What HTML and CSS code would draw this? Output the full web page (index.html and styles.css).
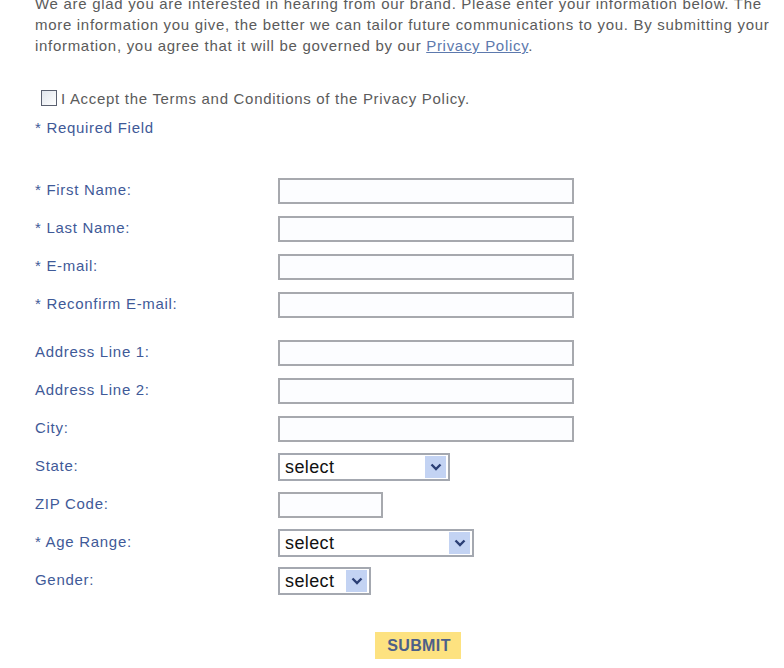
FILE: index.html
```html
<!DOCTYPE html>
<html>
<head>
<meta charset="utf-8">
<link rel="stylesheet" href="styles.css">
</head>
<body>
<div class="page">
  <p class="intro">We are glad you are interested in hearing from our brand. Please enter your information below. The<br>more information you give, the better we can tailor future communications to you. By submitting your<br>information, you agree that it will be governed by our <a href="#" class="link">Privacy Policy</a>.</p>

  <label class="accept"><span class="box"></span>I Accept the Terms and Conditions of the Privacy Policy.</label>
  <div class="required">* Required Field</div>

  <form class="form">
    <div class="group">
      <div class="row"><span class="label">* First Name:</span><input class="text wide" type="text"></div>
      <div class="row"><span class="label">* Last Name:</span><input class="text wide" type="text"></div>
      <div class="row"><span class="label">* E-mail:</span><input class="text wide" type="text"></div>
      <div class="row"><span class="label">* Reconfirm E-mail:</span><input class="text wide" type="text"></div>
    </div>
    <div class="group">
      <div class="row"><span class="label">Address Line 1:</span><input class="text wide" type="text"></div>
      <div class="row"><span class="label">Address Line 2:</span><input class="text wide" type="text"></div>
      <div class="row"><span class="label">City:</span><input class="text wide" type="text"></div>
      <div class="row"><span class="label">State:</span>
        <div class="sel state"><span class="val">select</span><span class="arrow"><svg width="12" height="8" viewBox="0 0 12 8"><path d="M1.5 1.5 L6 6 L10.5 1.5" fill="none" stroke="#2b3f75" stroke-width="2.4"/></svg></span></div>
      </div>
      <div class="row"><span class="label">ZIP Code:</span><input class="text zip" type="text"></div>
      <div class="row"><span class="label">* Age Range:</span>
        <div class="sel age"><span class="val">select</span><span class="arrow"><svg width="12" height="8" viewBox="0 0 12 8"><path d="M1.5 1.5 L6 6 L10.5 1.5" fill="none" stroke="#2b3f75" stroke-width="2.4"/></svg></span></div>
      </div>
      <div class="row"><span class="label">Gender:</span>
        <div class="sel gender"><span class="val">select</span><span class="arrow"><svg width="12" height="8" viewBox="0 0 12 8"><path d="M1.5 1.5 L6 6 L10.5 1.5" fill="none" stroke="#2b3f75" stroke-width="2.4"/></svg></span></div>
      </div>
    </div>
    <div class="actions"><button type="button" class="submit">SUBMIT</button></div>
  </form>
</div>
</body>
</html>
```
FILE: styles.css
```css
html, body { margin: 0; padding: 0; background: #ffffff; }
body { font-family: "Liberation Sans", Arial, sans-serif; font-size: 15px; letter-spacing: 0.7px; color: #5a5a5a; overflow: hidden; }
.page { padding-left: 35px; padding-right: 0; }
.intro { margin: -7px 0 0 0; line-height: 21px; color: #5b5b5b; white-space: nowrap; }
.link { color: #5d79ad; text-decoration: underline; }
.accept { display: flex; align-items: center; margin: 33px 0 0 6px; height: 18px; color: #5b5b5b; }
.box { width: 16px; height: 16px; border: 1px solid #5a6070; background: linear-gradient(135deg, #e0e5ec, #ffffff); margin-right: 4px; box-sizing: border-box; }
.required { margin-top: 12px; color: #3f5a98; line-height: 18px; }
.form { margin-top: 41px; display: flex; flex-direction: column; gap: 22px; }
.group { display: flex; flex-direction: column; gap: 12px; }
.row { display: flex; align-items: center; height: 26px; }
.label { width: 243px; flex: none; color: #3f5a98; white-space: nowrap; padding-bottom: 3px; }
.text { box-sizing: border-box; height: 26px; border: 2px solid #a7a9ae; background: #fcfdff; padding: 0; margin: 0; }
.wide { width: 296px; }
.zip { width: 105px; }
.sel { box-sizing: border-box; height: 28px; flex: none; border: 2px solid #a4a8b0; display: flex; align-items: center; justify-content: space-between; padding: 0 2px 0 5px; background: #fff; }
.val { color: #111; font-size: 18px; letter-spacing: 0.4px; font-family: "Liberation Sans", Arial, sans-serif; }
.arrow { width: 21px; height: 22px; background: #c3d3f3; display: flex; align-items: center; justify-content: center; }
.state { width: 172px; }
.age { width: 196px; }
.gender { width: 93px; }
.actions { display: flex; padding-left: 340px; margin-top: 16px; }
.submit { width: 86px; height: 27px; border: none; background: #fde280; color: #4d6088; font-family: "Liberation Sans", Arial, sans-serif; font-weight: bold; font-size: 16px; letter-spacing: 0.4px; padding: 0 0 0 2px; }
```
